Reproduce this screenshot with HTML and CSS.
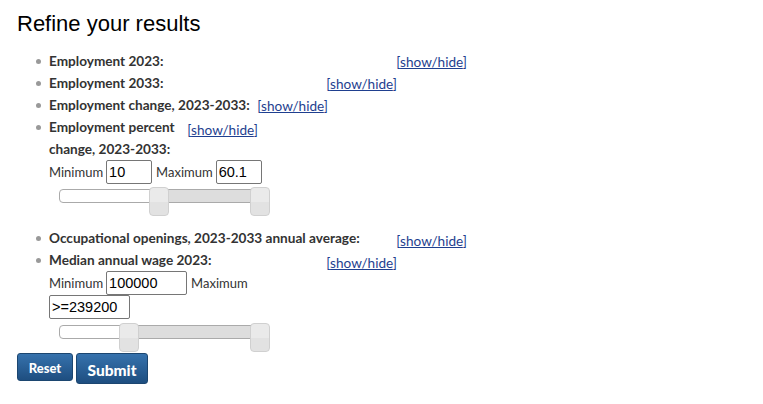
FILE: index.html
```html
<!DOCTYPE html>
<html>
<head>
<meta charset="utf-8">
<link rel="stylesheet" href="styles.css">
</head>
<body>
<div class="page">
  <h1 class="title">Refine your results</h1>
  <ul class="filters">
    <li class="item row-a">
      <div class="head"><span class="label">Employment 2023:</span><span class="toggle">[<a href="#">show/hide</a>]</span></div>
    </li>
    <li class="item row-b">
      <div class="head"><span class="label">Employment 2033:</span><span class="toggle">[<a href="#">show/hide</a>]</span></div>
    </li>
    <li class="item row-c">
      <div class="head"><span class="label">Employment change, 2023-2033:</span><span class="toggle">[<a href="#">show/hide</a>]</span></div>
    </li>
    <li class="item row-d">
      <div class="head"><span class="label label-wrap">Employment percent change, 2023-2033:</span><span class="toggle toggle-low">[<a href="#">show/hide</a>]</span></div>
      <div class="range">
        <div class="fields">
          <span class="fl">Minimum</span><input class="box box-s" type="text" value="10">
          <span class="fl">Maximum</span><input class="box box-s" type="text" value="60.1">
        </div>
        <div class="slider slider-pct">
          <div class="fill" style="left:99px; right:10px"></div>
          <div class="handle" style="left:89px"></div>
          <div class="handle handle-end"></div>
        </div>
      </div>
    </li>
    <li class="item row-a">
      <div class="head"><span class="label">Occupational openings, 2023-2033 annual average:</span><span class="toggle toggle-low">[<a href="#">show/hide</a>]</span></div>
    </li>
    <li class="item row-b">
      <div class="head"><span class="label">Median annual wage 2023:</span><span class="toggle toggle-low">[<a href="#">show/hide</a>]</span></div>
      <div class="range">
        <div class="fields">
          <span class="fl">Minimum</span><input class="box box-l" type="text" value="100000">
          <span class="fl">Maximum</span>
        </div>
        <div class="fields">
          <input class="box box-l" type="text" value="&gt;=239200">
        </div>
        <div class="slider slider-wage">
          <div class="fill" style="left:69px; right:10px"></div>
          <div class="handle" style="left:59px"></div>
          <div class="handle handle-end"></div>
        </div>
      </div>
    </li>
  </ul>
  <div class="actions">
    <button class="btn btn-reset" type="button">Reset</button>
    <button class="btn btn-submit" type="button">Submit</button>
  </div>
</div>
</body>
</html>
```
FILE: styles.css
```css
html, body {
  margin: 0;
  padding: 0;
  background: #fff;
}
.page {
  padding: 0 17px;
  font-family: Lato, "Liberation Sans", sans-serif;
  color: #333;
}
.title {
  font-family: "Liberation Sans", Arial, sans-serif;
  font-weight: normal;
  font-size: 22px;
  color: #000;
  margin: 0;
  padding-top: 11px;
  line-height: 26px;
  height: 39px;
}
.filters {
  list-style: none;
  margin: 0;
  padding: 0 0 0 32px;
}
.item {
  position: relative;
  font-size: 13.6px;
}
.item::before {
  content: "";
  position: absolute;
  left: -13px;
  top: 9px;
  width: 5px;
  height: 5px;
  border-radius: 50%;
  background: #999;
}
.head {
  display: flex;
  justify-content: space-between;
  align-items: flex-start;
  line-height: 22px;
}
.row-a .head { width: 418px; }
.row-b .head { width: 348px; }
.row-c .head { width: 279px; }
.row-d .head { width: 209px; }
.label {
  font-weight: bold;
  color: #333;
}
.label-wrap {
  width: 135px;
}
.toggle {
  color: #1f3f8f;
  margin-top: 1px;
  margin-bottom: -1px;
}
.toggle-low {
  margin-top: 3px;
  margin-bottom: -3px;
}
.toggle a {
  color: #1f3f8f;
  text-decoration: underline;
}
.fields {
  display: flex;
  align-items: center;
  height: 24px;
  font-size: 13px;
}
.fl {
  color: #333;
  margin-right: 3px;
}
.fl + .box { margin-right: 4px; }
.box {
  box-sizing: border-box;
  height: 24px;
  border: 1px solid #767676;
  border-radius: 2px;
  padding: 0 2px;
  font-family: "Liberation Sans", Arial, sans-serif;
  font-size: 14.5px;
  color: #000;
  margin: 0;
}
.box-s { width: 46px; }
.box-l { width: 81px; }
.slider {
  position: relative;
  margin-left: 10px;
  width: 211px;
  height: 14px;
  box-sizing: border-box;
  border: 1px solid #aaa;
  border-radius: 4px;
  background: #fff;
}
.slider-pct {
  margin-top: 5px;
  margin-bottom: 24px;
}
.slider-wage {
  margin-top: 6px;
  margin-bottom: 14px;
}
.fill {
  position: absolute;
  top: 0;
  bottom: 0;
  background: #ddd;
}
.handle {
  position: absolute;
  top: -3px;
  width: 20px;
  height: 29px;
  box-sizing: border-box;
  border: 1px solid #d0d0d0;
  border-radius: 4px;
  background: linear-gradient(#eaeaea 0%, #eaeaea 50%, #e2e2e2 51%, #e2e2e2 100%);
}
.handle-end { right: -1px; }
.actions {
  display: flex;
  gap: 3px;
  align-items: flex-start;
}
.btn {
  font-family: Lato, "Liberation Sans", sans-serif;
  font-weight: 900;
  color: #fff;
  border: 1px solid #1c4670;
  border-radius: 3px;
  background: linear-gradient(#3672ad, #1e4e80);
  padding: 2px 0 0 0;
  margin: 0;
  cursor: pointer;
}
.btn-reset {
  width: 56px;
  height: 28px;
  font-size: 13px;
}
.btn-submit {
  width: 72px;
  height: 31px;
  font-size: 15.5px;
}
```
